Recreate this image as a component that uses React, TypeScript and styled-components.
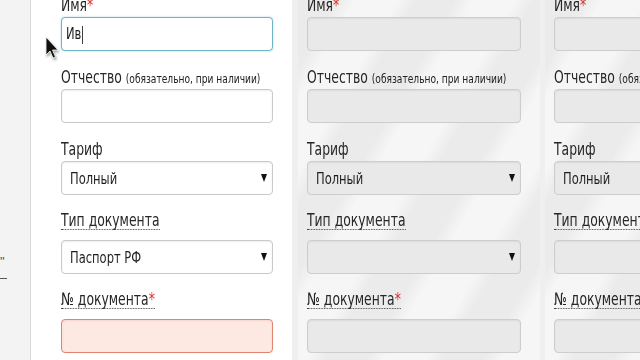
import React from 'react';
import styled, { createGlobalStyle, css } from 'styled-components';

const GlobalStyle = createGlobalStyle`
  html, body {
    margin: 0;
    padding: 0;
    background: #f2f2f2;
  }
  body {
    font-family: 'DejaVu Sans Condensed', 'Liberation Sans', sans-serif;
    color: #2a2a2a;
  }
`;

const Page = styled.div`
  position: relative;
  display: flex;
  width: 640px;
  height: 360px;
  overflow: hidden;
  background: #efefef;
`;

const LeftRail = styled.div`
  flex: 0 0 30px;
  border-right: 1px solid #d9d9d9;
  background: #f3f3f3;
  padding-top: 256px;
  font-family: 'Liberation Sans', sans-serif;
  font-size: 12px;
  color: #444;
  line-height: 12px;
`;

const RailMark = styled.div`
  width: 7px;
  margin-top: 10px;
  border-bottom: 1px solid #555;
`;

const Panel = styled.div<{ $first?: boolean; $disabled?: boolean }>`
  flex: 0 0 auto;
  box-sizing: border-box;
  width: ${(p) => (p.$first ? '261px' : '242px')};
  margin-right: ${(p) => (p.$first ? '6px' : '5px')};
  padding: 0 19px 0 ${(p) => (p.$first ? '30px' : '9px')};
  background: ${(p) =>
    p.$disabled
      ? 'repeating-linear-gradient(120deg, #ebebeb 0px, #ebebeb 34px, #f6f6f6 50px, #f6f6f6 86px, #ebebeb 102px)'
      : '#ffffff'};
`;

const Form = styled.div`
  margin-top: -4px;
  display: flex;
  flex-direction: column;
`;

const Field = styled.div<{ $beforeDotted?: boolean }>`
  display: flex;
  flex-direction: column;
  margin-bottom: ${(p) => (p.$beforeDotted ? '16px' : '17px')};
`;

const Label = styled.div<{ $dotted?: boolean }>`
  align-self: flex-start;
  font-size: 17px;
  line-height: 18px;
  white-space: nowrap;
  color: #262626;
  margin-bottom: 3px;
  transform: scaleX(0.81);
  transform-origin: left center;
  ${(p) =>
    p.$dotted &&
    css`
      border-bottom: 1px dotted #444;
      margin-bottom: 10px;
    `}
`;

const Hint = styled.span`
  font-size: 12.5px;
  line-height: 12px;
  color: #222;
`;

const Star = styled.span`
  color: #d9302c;
`;

type BoxState = 'normal' | 'focus' | 'error' | 'disabled';

const boxLook = {
  normal: css`
    background: #fff;
    border-color: #c9c9c9;
    box-shadow: inset 0 1px 2px rgba(0, 0, 0, 0.08);
  `,
  focus: css`
    background: #fff;
    border-color: #71b4c9;
    box-shadow: 0 0 2px rgba(80, 160, 200, 0.5);
  `,
  error: css`
    background: #fde8e2;
    border-color: #e2836f;
    box-shadow: inset 0 1px 2px rgba(200, 80, 60, 0.12);
  `,
  disabled: css`
    background: #e9e9e9;
    border-color: #cdcdcd;
    box-shadow: inset 0 1px 2px rgba(0, 0, 0, 0.06);
  `,
};

const Box = styled.div<{ $state: BoxState }>`
  position: relative;
  box-sizing: border-box;
  height: 34px;
  width: 100%;
  border: 1px solid;
  border-radius: 4px;
  display: flex;
  align-items: center;
  padding: 0 8px;
  font-size: 16px;
  color: #1e1e1e;
  ${(p) => boxLook[p.$state]}
`;

const Value = styled.span<{ $typed?: boolean }>`
  display: inline-block;
  white-space: nowrap;
  margin-left: ${(p) => (p.$typed ? '-4px' : '0')};
  transform: scaleX(0.8);
  transform-origin: left center;
`;

const Caret = styled.span`
  display: inline-block;
  width: 1px;
  height: 18px;
  margin-left: 1px;
  background: #111;
  vertical-align: middle;
`;

const Arrow = styled.span`
  position: absolute;
  right: 5px;
  top: 12px;
  width: 0;
  height: 0;
  border-left: 3.5px solid transparent;
  border-right: 3.5px solid transparent;
  border-top: 8px solid #111;
`;

const Pointer = styled.svg`
  position: absolute;
  left: 45px;
  top: 36px;
  filter: drop-shadow(1px 2px 1px rgba(0, 0, 0, 0.35));
`;

type Column = {
  first?: boolean;
  disabled?: boolean;
  name?: string;
  tariff: string;
  docType: string;
};

const columns: Column[] = [
  { first: true, name: 'Ив', tariff: 'Полный', docType: 'Паспорт РФ' },
  { disabled: true, tariff: 'Полный', docType: '' },
  { disabled: true, tariff: 'Полный', docType: '' },
];

const FormColumn: React.FC<{ col: Column }> = ({ col }) => {
  const base: BoxState = col.disabled ? 'disabled' : 'normal';
  return (
    <Panel $first={col.first} $disabled={col.disabled}>
      <Form>
        <Field>
          <Label>
            Имя<Star>*</Star>
          </Label>
          <Box $state={col.first ? 'focus' : base}>
            {col.name && (
              <Value $typed>
                {col.name}
                <Caret />
              </Value>
            )}
          </Box>
        </Field>
        <Field>
          <Label>
            Отчество <Hint>(обязательно, при наличии)</Hint>
          </Label>
          <Box $state={base} />
        </Field>
        <Field $beforeDotted>
          <Label>Тариф</Label>
          <Box $state={base}>
            <Value>{col.tariff}</Value>
            <Arrow />
          </Box>
        </Field>
        <Field $beforeDotted>
          <Label $dotted>Тип документа</Label>
          <Box $state={base}>
            <Value>{col.docType}</Value>
            <Arrow />
          </Box>
        </Field>
        <Field>
          <Label $dotted>
            № документа<Star>*</Star>
          </Label>
          <Box $state={col.first ? 'error' : base} />
        </Field>
      </Form>
    </Panel>
  );
};

const App: React.FC = () => {
  return (
    <>
      <GlobalStyle />
      <Page>
        <LeftRail>
          ''
          <RailMark />
        </LeftRail>
        {columns.map((col, i) => (
          <FormColumn key={i} col={col} />
        ))}
        <Pointer width="14" height="24" viewBox="0 0 14 24">
          <path d="M1 1 L1 19 L5 15 L8 22 L10.5 21 L7.5 14 L13 14 Z" fill="#111" stroke="#fff" strokeWidth="0.8" />
        </Pointer>
      </Page>
    </>
  );
};

export default App;
